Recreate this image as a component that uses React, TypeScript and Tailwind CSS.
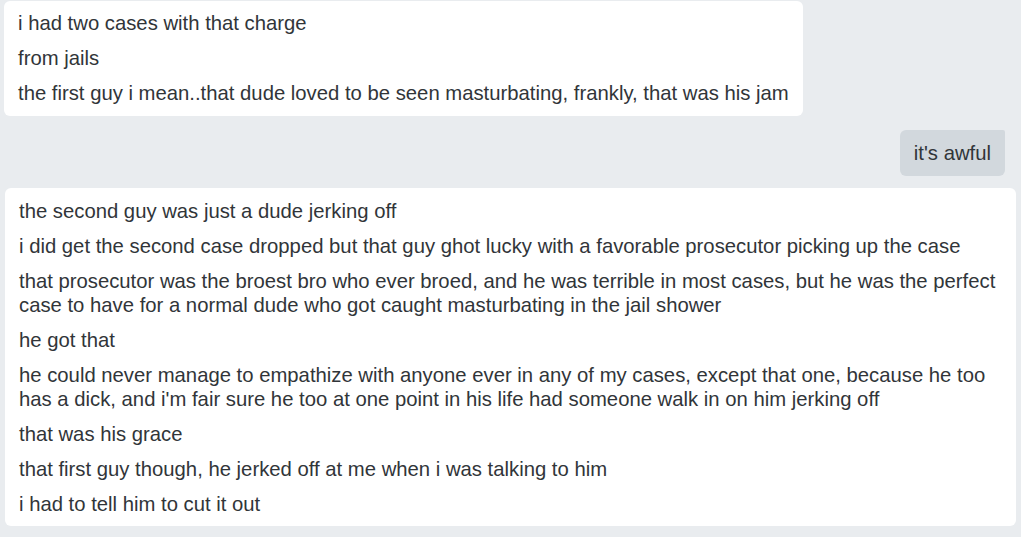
const FIRST = [
  "i had two cases with that charge",
  "from jails",
  "the first guy i mean..that dude loved to be seen masturbating, frankly, that was his jam",
];

const SECOND = [
  "the second guy was just a dude jerking off",
  "i did get the second case dropped but that guy ghot lucky with a favorable prosecutor picking up the case",
  "that prosecutor was the broest bro who ever broed, and he was terrible in most cases, but he was the perfect case to have for a normal dude who got caught masturbating in the jail shower",
  "he got that",
  "he could never manage to empathize with anyone ever in any of my cases, except that one, because he too has a dick, and i'm fair sure he too at one point in his life had someone walk in on him jerking off",
  "that was his grace",
  "that first guy though, he jerked off at me when i was talking to him",
  "i had to tell him to cut it out",
];

function Incoming({ lines, className }: { lines: string[]; className?: string }) {
  return (
    <div className={`bg-white rounded-md px-[14px] flex flex-col gap-[11px] ${className ?? ""}`}>
      {lines.map((l, i) => (
        <p key={i} className="leading-[24px]">
          {l}
        </p>
      ))}
    </div>
  );
}

export default function App() {
  return (
    <div
      className="w-[1021px] h-[537px] overflow-hidden bg-[#e9ecef] text-[20.3px] text-[#313539] flex flex-col pt-[1px]"
      style={{ fontFamily: '"Liberation Sans", Arial, sans-serif' }}
    >
      <Incoming lines={FIRST} className="self-start ml-[4px] pt-[10px] pb-[11px]" />
      <div className="self-end mr-[16px] mt-[14px] bg-[#d2d8dd] rounded-md rounded-tr-[2px] px-[14px] py-[11px] leading-[24px]">
        it's awful
      </div>
      <Incoming lines={SECOND} className="mx-[5px] mt-[12px] pt-[11px] pb-[10px]" />
    </div>
  );
}
